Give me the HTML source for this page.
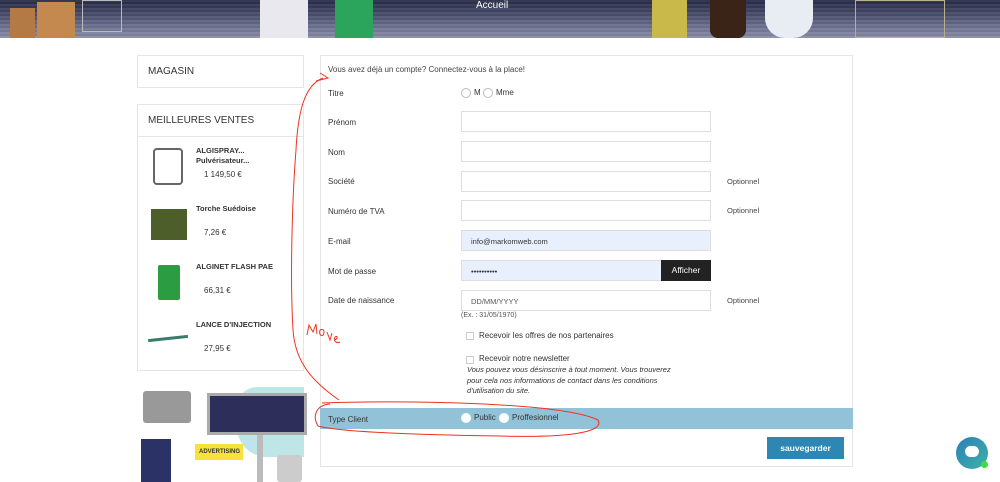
<!DOCTYPE html>
<html><head><meta charset="utf-8"><style>
*{margin:0;padding:0;box-sizing:border-box}
body{width:1000px;height:482px;overflow:hidden;background:#fff;font-family:"Liberation Sans",sans-serif;color:#333;position:relative}
.hdr{position:absolute;left:0;top:0;width:1000px;height:38px;background:repeating-linear-gradient(180deg,rgba(255,255,255,0.06) 0 2px,rgba(0,0,0,0.05) 2px 4px),linear-gradient(180deg,#272a45 0%,#4a4f6e 40%,#6c7190 70%,#8a8ea8 100%)}
.hdr .t{position:absolute;left:476px;top:0;color:#fff;font-size:10px}
.ab{position:absolute}
.box{position:absolute;border:1px solid #e5e5e5;background:#fff}
.lbl{position:absolute;left:328px;font-size:8px;color:#333}
.inp{position:absolute;left:461px;width:250px;height:21px;border:1px solid #ddd;background:#fff;font-size:7.5px;padding:6px 9px;color:#333}
.opt{position:absolute;left:727px;font-size:7.5px;color:#444}
.rad{position:absolute;width:10px;height:10px;border:1px solid #bbb;border-radius:50%;background:#fff}
.s{font-size:8px;position:absolute}
</style></head><body>
<div class="hdr">
<div class="ab" style="left:10px;top:8px;width:25px;height:30px;background:#b47a45"></div>
<div class="ab" style="left:37px;top:2px;width:38px;height:36px;background:#c4894f"></div>
<div class="ab" style="left:82px;top:0;width:40px;height:32px;border:1px solid #bbb"></div>
<div class="ab" style="left:260px;top:0;width:48px;height:38px;background:#e8e8ee"></div>
<div class="ab" style="left:335px;top:0;width:38px;height:38px;background:#2aa55b"></div>
<div class="ab" style="left:652px;top:0;width:35px;height:38px;background:#c9b84a"></div>
<div class="ab" style="left:710px;top:0;width:36px;height:38px;background:#3a2418;border-radius:0 0 8px 8px"></div>
<div class="ab" style="left:765px;top:0;width:48px;height:38px;background:#e8ecf3;border-radius:0 0 20px 20px"></div>
<div class="ab" style="left:855px;top:0;width:90px;height:38px;border:1px solid #b8b28a"></div>
<div class="t">Accueil</div></div>

<div class="box" style="left:137px;top:55px;width:167px;height:33px"><div class="ab" style="left:10px;top:10px;font-size:10px">MAGASIN</div></div>
<div class="box" style="left:137px;top:104px;width:167px;height:267px">
<div class="ab" style="left:10px;top:10px;font-size:10px">MEILLEURES VENTES</div>
<div class="ab" style="left:0;top:31px;width:165px;border-top:1px solid #e5e5e5"></div>
<div class="ab" style="left:15px;top:43px;width:30px;height:37px;border:2px solid #666;border-radius:4px"></div>
<div class="ab" style="left:58px;top:41px;font-size:7.5px;font-weight:bold;line-height:10px">ALGISPRAY...<br>Pulvérisateur...</div>
<div class="s" style="left:66px;top:65px">1 149,50 €</div>
<div class="ab" style="left:13px;top:104px;width:36px;height:31px;background:#4d5e2a"></div>
<div class="ab" style="left:58px;top:99px;font-size:7.5px;font-weight:bold">Torche Suédoise</div>
<div class="s" style="left:66px;top:123px">7,26 €</div>
<div class="ab" style="left:20px;top:160px;width:22px;height:35px;background:#2c9c42;border-radius:2px"></div>
<div class="ab" style="left:58px;top:157px;font-size:7.5px;font-weight:bold">ALGINET FLASH PAE</div>
<div class="s" style="left:66px;top:181px">66,31 €</div>
<div class="ab" style="left:10px;top:232px;width:40px;height:3px;background:#3a7b6b;transform:rotate(-6deg)"></div>
<div class="ab" style="left:58px;top:215px;font-size:7.5px;font-weight:bold">LANCE D'INJECTION</div>
<div class="s" style="left:66px;top:239px">27,95 €</div>
</div>
<div class="ab" style="left:137px;top:387px;width:167px;height:95px;background:#fff">
<div class="ab" style="left:100px;top:0;width:67px;height:70px;background:#bfe6e6;border-radius:20px 0 0 30px"></div>
<div class="ab" style="left:6px;top:4px;width:48px;height:32px;background:#999;border-radius:3px"></div>
<div class="ab" style="left:70px;top:6px;width:100px;height:42px;background:#2d2f5a;border:3px solid #aaa"></div>
<div class="ab" style="left:120px;top:48px;width:6px;height:47px;background:#bbb"></div>
<div class="ab" style="left:4px;top:52px;width:30px;height:43px;background:#2b3366"></div>
<div class="ab" style="left:58px;top:57px;width:48px;height:16px;background:#f6e23a;font-size:6px;padding:5px 4px;font-weight:bold">ADVERTISING</div>
<div class="ab" style="left:140px;top:68px;width:25px;height:27px;background:#ccc;border-radius:3px"></div>
</div>

<div class="box" style="left:320px;top:55px;width:533px;height:412px"></div>
<div class="ab" style="left:328px;top:65px;font-size:8px;color:#444">Vous avez déjà un compte? Connectez-vous à la place!</div>
<div class="lbl" style="top:89px">Titre</div>
<div class="rad" style="left:461px;top:88px"></div><div class="s" style="left:474px;top:88px">M</div>
<div class="rad" style="left:483px;top:88px"></div><div class="s" style="left:496px;top:88px">Mme</div>
<div class="lbl" style="top:118px">Prénom</div><div class="inp" style="top:111px"></div>
<div class="lbl" style="top:148px">Nom</div><div class="inp" style="top:141px"></div>
<div class="lbl" style="top:177px">Société</div><div class="inp" style="top:171px"></div><div class="opt" style="top:177px">Optionnel</div>
<div class="lbl" style="top:207px">Numéro de TVA</div><div class="inp" style="top:200px"></div><div class="opt" style="top:206px">Optionnel</div>
<div class="lbl" style="top:237px">E-mail</div><div class="inp" style="top:230px;background:#e8f0fe">info@markomweb.com</div>
<div class="lbl" style="top:267px">Mot de passe</div><div class="inp" style="top:260px;background:#e8f0fe;width:201px">••••••••••</div>
<div class="ab" style="left:661px;top:260px;width:50px;height:21px;background:#222;color:#fff;font-size:8.5px;padding-top:5px;text-align:center">Afficher</div>
<div class="lbl" style="top:296px">Date de naissance</div><div class="inp" style="top:290px;color:#555">DD/MM/YYYY</div><div class="opt" style="top:296px">Optionnel</div>
<div class="ab" style="left:461px;top:312px;font-size:7px;color:#555">(Ex. : 31/05/1970)</div>
<div class="ab" style="left:466px;top:332px;width:8px;height:8px;border:1px solid #ccc"></div>
<div class="s" style="left:479px;top:331px">Recevoir les offres de nos partenaires</div>
<div class="ab" style="left:466px;top:356px;width:8px;height:8px;border:1px solid #ccc"></div>
<div class="s" style="left:479px;top:354px">Recevoir notre newsletter</div>
<div class="ab" style="left:467px;top:365px;font-size:7.5px;font-style:italic;line-height:10.5px;white-space:nowrap">Vous pouvez vous désinscrire à tout moment. Vous trouverez<br>pour cela nos informations de contact dans les conditions<br>d'utilisation du site.</div>
<div class="ab" style="left:320px;top:408px;width:533px;height:21px;background:#92c2d8"></div>
<div class="lbl" style="top:415px">Type Client</div>
<div class="ab" style="left:461px;top:413px;width:10px;height:10px;border-radius:50%;background:#fff"></div><div class="s" style="left:474px;top:413px">Public</div>
<div class="ab" style="left:499px;top:413px;width:10px;height:10px;border-radius:50%;background:#fff"></div><div class="s" style="left:512px;top:413px">Proffesionnel</div>
<div class="ab" style="left:767px;top:437px;width:77px;height:22px;background:#2e86b2;color:#fff;font-size:8.5px;font-weight:bold;text-align:center;padding-top:6px">sauvegarder</div>

<div class="ab" style="left:956px;top:437px;width:32px;height:32px;border-radius:50%;background:linear-gradient(135deg,#2f7fb5,#3bb2a8)">
<div class="ab" style="left:9px;top:9px;width:14px;height:11px;background:#fff;border-radius:6px"></div>
<div class="ab" style="left:25px;top:24px;width:7px;height:7px;border-radius:50%;background:#3be03b"></div></div>

<svg class="ab" style="left:0;top:0" width="1000" height="482">
<g fill="none" stroke="#e32" stroke-width="1">
<path d="M339 400 C310 380 295 360 293 330 C290 280 292 200 296 150 C298 110 305 85 323 78"/>
<path d="M316 81 L328 78 L320 73"/>
<path d="M322 403 C400 400 560 402 598 420 C605 432 570 438 500 436 C420 435 340 432 318 426 C312 416 316 405 330 404"/>
<path d="M307 335 L309 325 L313 332 L316 324 L317 334 M320 330 C318 336 324 338 324 332 C324 328 320 330 320 330 M327 332 L330 340 L332 333 M334 340 C338 339 338 335 335 337 C333 340 336 344 340 342"/>
</g></svg>
</body></html>
